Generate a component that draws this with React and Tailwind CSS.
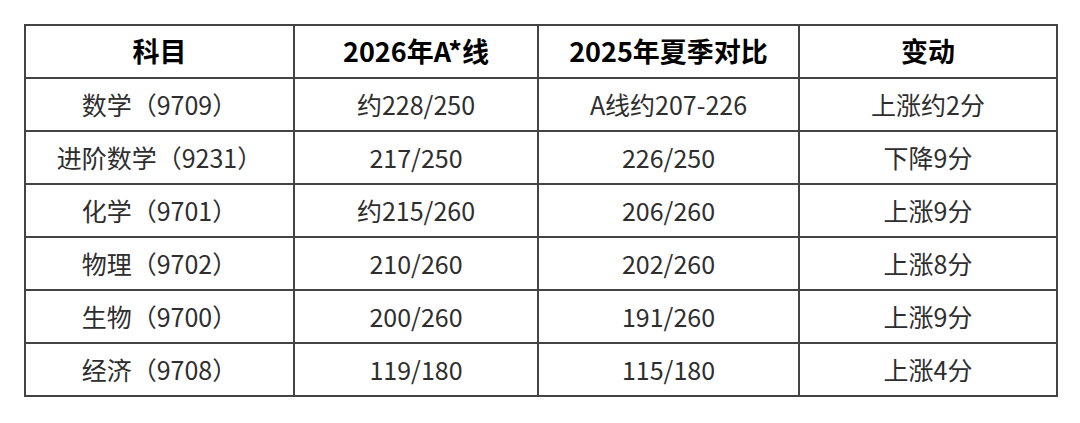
const rows = [
  ["数学（9709）", "约228/250", "A线约207-226", "上涨约2分"],
  ["进阶数学（9231）", "217/250", "226/250", "下降9分"],
  ["化学（9701）", "约215/260", "206/260", "上涨9分"],
  ["物理（9702）", "210/260", "202/260", "上涨8分"],
  ["生物（9700）", "200/260", "191/260", "上涨9分"],
  ["经济（9708）", "119/180", "115/180", "上涨4分"],
];

export default function App() {
  return (
    <div
      className="w-[1080px] h-[423px] bg-white pt-[24px] pl-[24px]"
      style={{ fontFamily: '"Noto Sans CJK SC", "Noto Sans", sans-serif' }}
    >
      <table className="border-collapse border-2 border-[#444] table-fixed w-[1032px]">
        <colgroup>
          <col className="w-[269px]" />
          <col className="w-[244px]" />
          <col className="w-[261px]" />
          <col className="w-[258px]" />
        </colgroup>
        <thead>
          <tr className="h-[53px]">
            <th className="border-2 border-[#444] text-[27px] font-bold text-black">科目</th>
            <th className="border-2 border-[#444] text-[27px] font-bold text-black">2026年A*线</th>
            <th className="border-2 border-[#444] text-[27px] font-bold text-black">2025年夏季对比</th>
            <th className="border-2 border-[#444] text-[27px] font-bold text-black">变动</th>
          </tr>
        </thead>
        <tbody>
          {rows.map((r) => (
            <tr key={r[0]} className="h-[53px]">
              {r.map((c, i) => (
                <td key={i} className="border-2 border-[#444] text-center text-[25px] leading-none text-[#2e2e2e]">
                  {c}
                </td>
              ))}
            </tr>
          ))}
        </tbody>
      </table>
    </div>
  );
}
